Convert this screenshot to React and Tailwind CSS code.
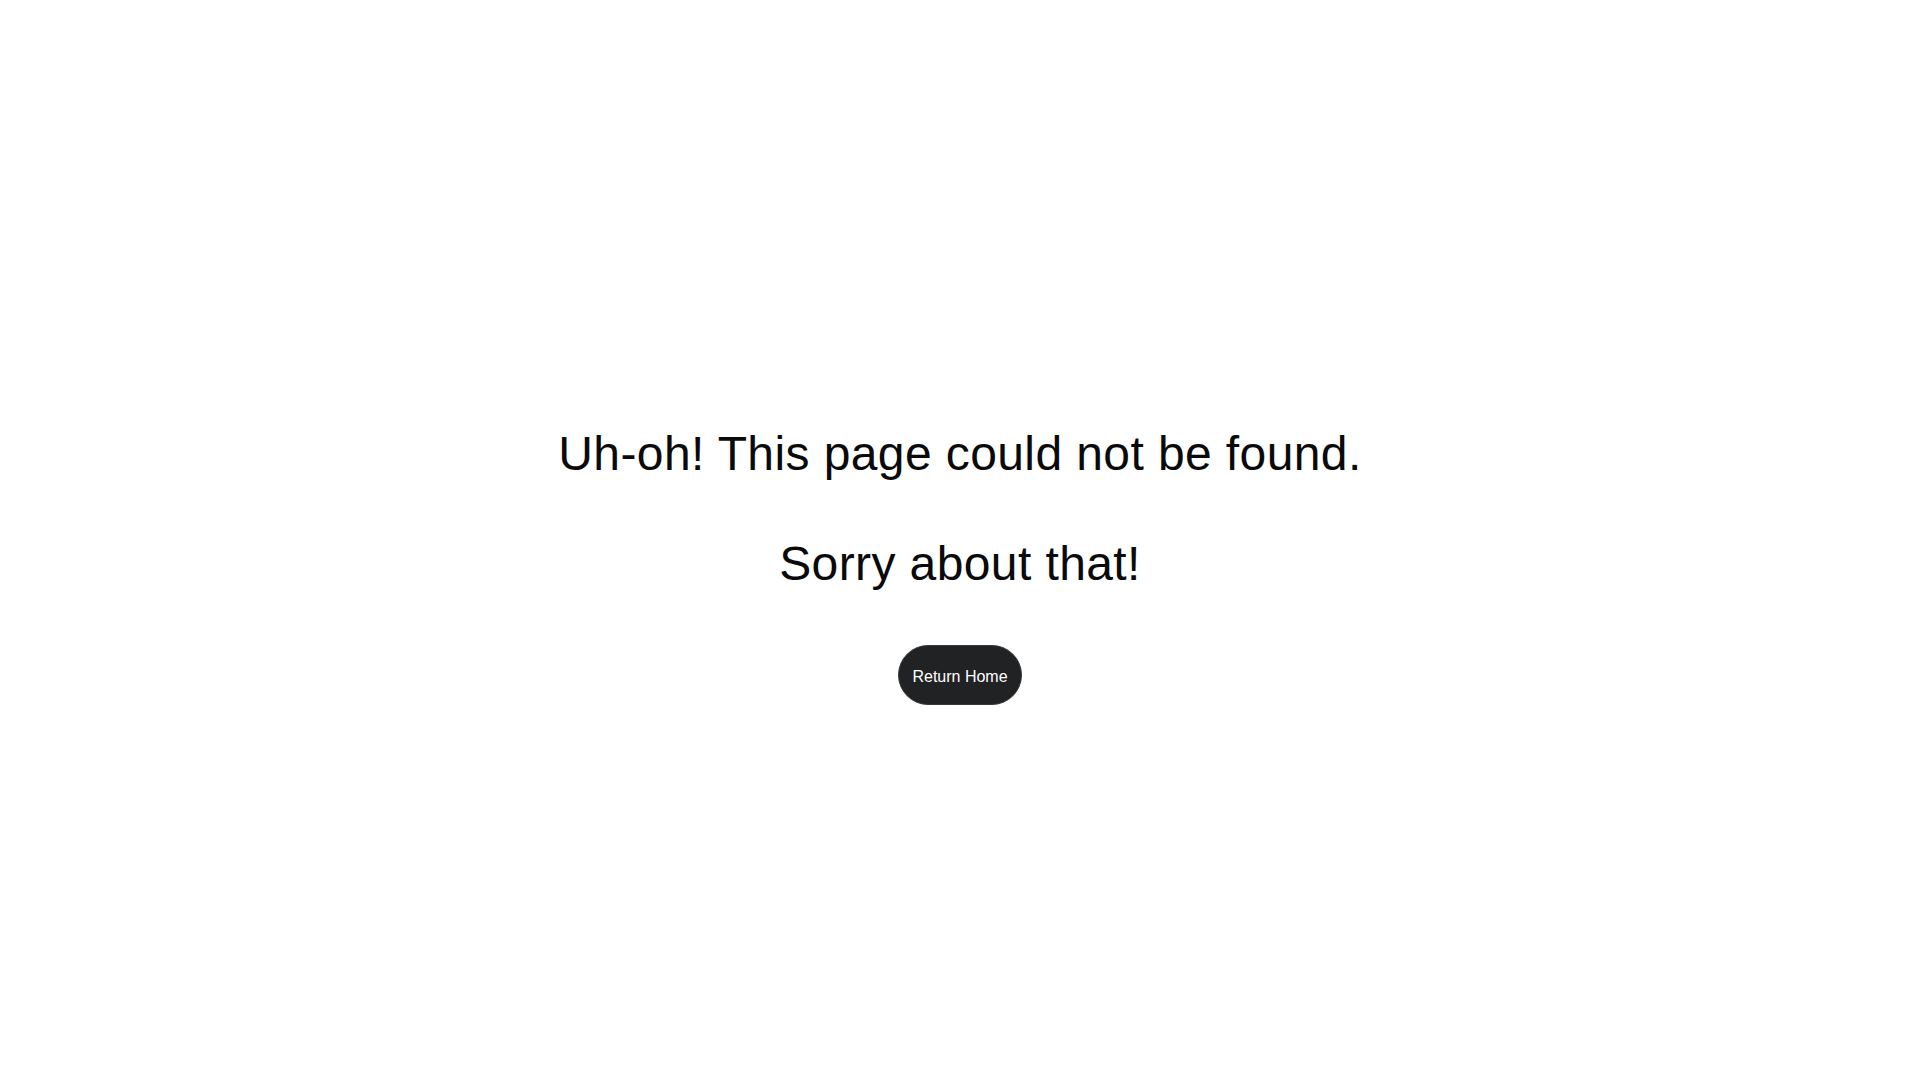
export default function App() {
  return (
    <div className="min-h-screen w-full bg-white flex flex-col items-center pt-[426px] font-['Liberation_Sans',Arial,sans-serif]">
      <h1 className="text-[48px] leading-[1.149] font-normal tracking-[0.4px] text-[#0a0a0a] text-center">
        Uh-oh! This page could not be found.
        <br />
        <br />
        Sorry about that!
      </h1>
      <a
        href="/"
        className="mt-[54px] inline-flex items-center justify-center h-[60px] px-[13px] pt-[3px] rounded-full bg-[#212223] border border-[#3a3a3a] text-white text-[16px] leading-none"
      >
        Return Home
      </a>
    </div>
  );
}
